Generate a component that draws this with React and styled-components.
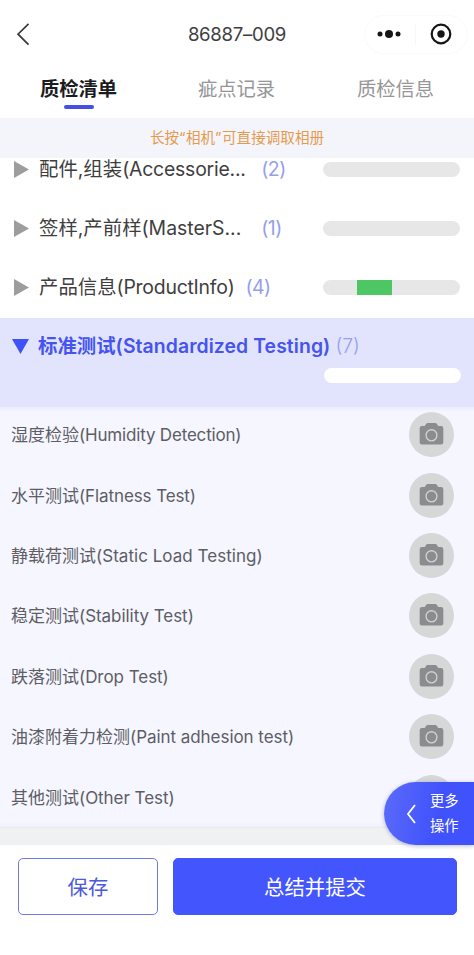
import React from "react";
import styled, { createGlobalStyle } from "styled-components";

const Global = createGlobalStyle`
  * { box-sizing: border-box; }
  body { margin: 0; background: #fff; }
  button { font: inherit; cursor: pointer; }
`;

const Page = styled.div`
  position: relative;
  display: flex;
  flex-direction: column;
  width: 474px;
  height: 955px;
  overflow: hidden;
  background: #fff;
  color: #3e3e40;
  font-family: Inter, "Noto Sans CJK SC", sans-serif;
`;

const NavBar = styled.header`
  display: grid;
  grid-template-columns: 110px 1fr 110px;
  align-items: center;
  height: 68px;
  flex: none;
`;

const BackButton = styled.button`
  display: flex;
  width: 46px;
  padding: 0 0 0 16px;
  border: 0;
  background: none;
`;

const Title = styled.h1`
  margin: 0;
  text-align: center;
  font: 400 18.6px/24px Inter, sans-serif;
  letter-spacing: -0.3px;
`;

const Capsule = styled.div`
  display: flex;
  align-items: center;
  gap: 14px;
  width: 104px;
  height: 39px;
  padding-left: 12px;
  border: 1px solid #fafafa;
  border-radius: 20px;
`;

const CapsuleDivider = styled.i`
  width: 1px;
  height: 22px;
  background: #f7f7f7;
`;

const Tabs = styled.nav`
  display: flex;
  height: 50px;
  flex: none;
`;

const Tab = styled.div`
  display: flex;
  flex-direction: column;
  align-items: center;
  flex: 1;
  padding: 7px 1px 0 0;
  font-size: 19.3px;
  line-height: 28px;
  font-weight: ${(p) => (p.$active ? 700 : 400)};
  color: ${(p) => (p.$active ? "#1c1c1e" : "#969698")};
  &:last-child { padding: 7px 0 0 1px; }
`;

const TabMark = styled.i`
  width: 30px;
  height: 4px;
  margin-top: 2px;
  border-radius: 2px;
  background: #444fe8;
`;

const Notice = styled.div`
  height: 40px;
  flex: none;
  background: #f3f5fa;
  color: #e69a50;
  text-align: center;
  font: 400 14.6px/37px "Noto Sans CJK SC", sans-serif;
`;

const Quote = styled.span`
  font-family: Inter, sans-serif;
  letter-spacing: 0.4px;
`;

const List = styled.main`
  flex: 1;
  overflow: hidden;
  background: linear-gradient(#f2f3f6, #f0f1f3);
`;

const Group = styled.div`
  display: flex;
  align-items: center;
  height: 59px;
  padding: 0 14px 3px;
  background: #fff;
  &:first-child { margin-top: -17px; }
`;

const GroupName = styled.span`
  margin-left: 10px;
  font-size: 19.4px;
  line-height: 28px;
  white-space: nowrap;
`;

const Latin = styled.span`
  letter-spacing: ${(p) => p.$track || 0}px;
`;

const Count = styled.span`
  margin-left: ${(p) => p.$gap}px;
  font-size: 19.4px;
  line-height: 28px;
  letter-spacing: ${(p) => (p.$light ? 0 : -0.5)}px;
  font-weight: ${(p) => (p.$light ? 300 : 400)};
  color: #969eed;
`;

const Meter = styled.div`
  width: 137px;
  height: 15px;
  margin-left: auto;
  flex: none;
  border-radius: 8px;
  background: ${(p) => (p.$open ? "#fff" : "#e7e7e7")};
`;

const MeterFill = styled.div`
  width: 25%;
  height: 100%;
  margin-left: 25%;
  background: #4cc764;
`;

const OpenGroup = styled.section`
  display: flex;
  flex-direction: column;
  height: 89px;
  padding: 14px 13px 0 12px;
  background: #e2e4fe;
`;

const OpenTitle = styled.div`
  display: flex;
  align-items: center;
  height: 28px;
  margin-bottom: 8px;
  color: #4654ef;
  ${GroupName} {
    margin-left: 9px;
    font-weight: 600;
  }
`;

const Items = styled.div`
  height: 421px;
  border-bottom: 1px solid #e9eaf0;
  background: linear-gradient(#ecedf9, #f5f6ff 5px, #f5f6ff 414px, #f0f1fa);
  overflow: hidden;
`;

const Item = styled.div`
  display: flex;
  align-items: center;
  justify-content: space-between;
  height: 60.4px;
  padding: 0 20.5px 5px 11px;
  color: #5d5d63;
  font-size: 17px;
  line-height: 26px;
  white-space: nowrap;
`;

const ItemName = styled.span`
  padding-top: 1px;
`;

const CameraButton = styled.button`
  display: grid;
  place-items: center;
  width: 45px;
  height: 45px;
  padding: 0 0 1px;
  border: 0;
  border-radius: 50%;
  background: #d6d8d8;
`;

const Footer = styled.footer`
  display: flex;
  gap: 15px;
  height: 110px;
  flex: none;
  padding: 13px 17px 0 18px;
  background: #fff;
`;

const Action = styled.button`
  flex: ${(p) => (p.$primary ? "1" : "0 0 140px")};
  height: 57px;
  padding: 0 0 2px;
  border: 1px solid ${(p) => (p.$primary ? "#4355fd" : "#6f7aea")};
  border-radius: 5px;
  background: ${(p) => (p.$primary ? "#4355fd" : "#fff")};
  color: ${(p) => (p.$primary ? "#fff" : "#4c58de")};
  font-size: 20.4px;
`;

const MoreTab = styled.button`
  position: absolute;
  right: 0;
  bottom: 110px;
  display: flex;
  align-items: center;
  gap: 13px;
  width: 90px;
  height: 63px;
  padding: 0 0 0 22px;
  border: 0;
  border-radius: 32px 0 0 32px;
  background: linear-gradient(100deg, #5b6bfa, #4052fc 60%);
  box-shadow: 0 1px 4px rgba(50, 60, 120, 0.35);
  color: #fff;
  font-size: 14.3px;
  line-height: 24.5px;
  text-align: left;
`;

const Camera = () => (
  <svg width="25" height="24" viewBox="0 0 26 24" preserveAspectRatio="none">
    <path
      d="M3 4H6L7.5 1.7Q8 1 9 1H17Q18 1 18.5 1.7L20 4H23Q25.3 4 25.3 6.3V20.2Q25.3 22.5 23 22.5H3Q.7 22.5 .7 20.2V6.3Q.7 4 3 4Z"
      fill="#8b8c8d"
    />
    <circle cx="13" cy="13.3" r="5.6" fill="none" stroke="#d0d2d2" strokeWidth="1.4" />
  </svg>
);

const groups = [
  { cjk: ["配件", "组装"], latin: "(Accessorie...", track: -0.2, gap: 15.5, count: 2 },
  { cjk: ["签样", "产前样"], latin: "(MasterS...", track: 0, gap: 20, count: 1 },
  { cjk: ["产品信息"], latin: "(ProductInfo)", track: -0.22, gap: 11, count: 4, filled: true },
];

const items = [
  ["湿度检验", "(Humidity Detection)", -0.18],
  ["水平测试", "(Flatness Test)", -0.1],
  ["静载荷测试", "(Static Load Testing)", 0.03],
  ["稳定测试", "(Stability Test)", -0.05],
  ["跌落测试", "(Drop Test)", -0.05],
  ["油漆附着力检测", "(Paint adhesion test)", -0.05],
  ["其他测试", "(Other Test)", -0.05],
];

export default function App() {
  return (
    <Page>
      <Global />
      <NavBar>
        <BackButton aria-label="back">
          <svg width="14" height="24" viewBox="0 0 14 24" fill="none" stroke="#3a3a3a" strokeWidth="1.7">
            <path d="M12.5 1.8 2 12.2 12.5 22.6" />
          </svg>
        </BackButton>
        <Title>86887–009</Title>
        <Capsule>
          <svg width="24" height="10" viewBox="0 0 24 10" fill="#151515">
            <circle cx="3" cy="5" r="2.5" />
            <circle cx="12" cy="5" r="4" />
            <circle cx="21" cy="5" r="2.5" />
          </svg>
          <CapsuleDivider />
          <svg width="22" height="22" viewBox="0 0 22 22">
            <circle cx="11" cy="11" r="9.3" fill="none" stroke="#151515" strokeWidth="2.2" />
            <circle cx="11" cy="11" r="3.7" fill="#151515" />
          </svg>
        </Capsule>
      </NavBar>
      <Tabs>
        <Tab $active>
          质检清单
          <TabMark />
        </Tab>
        <Tab>疵点记录</Tab>
        <Tab>质检信息</Tab>
      </Tabs>
      <Notice>
        长按<Quote>“</Quote>相机<Quote>”</Quote>可直接调取相册
      </Notice>
      <List>
        {groups.map((g) => (
          <Group key={g.latin}>
            <svg width="15" height="17" viewBox="0 0 15 17">
              <path d="M0 0 15 8.5 0 17Z" fill="#9d9d9f" />
            </svg>
            <GroupName>
              {g.cjk.join(",")}
              <Latin $track={g.track}>{g.latin}</Latin>
            </GroupName>
            <Count $gap={g.gap}>({g.count})</Count>
            <Meter>{g.filled && <MeterFill />}</Meter>
          </Group>
        ))}
        <OpenGroup>
          <OpenTitle>
            <svg width="17" height="15" viewBox="0 0 17 15">
              <path d="M0 0H17L8.5 15Z" fill="#3f51f8" />
            </svg>
            <GroupName>
              标准测试<Latin $track={0.08}>(Standardized Testing)</Latin>
            </GroupName>
            <Count $gap={5} $light>(7)</Count>
          </OpenTitle>
          <Meter $open />
        </OpenGroup>
        <Items>
          {items.map(([cjk, latin, track]) => (
            <Item key={cjk}>
              <ItemName>
                {cjk}
                <Latin $track={track}>{latin}</Latin>
              </ItemName>
              <CameraButton aria-label="camera">
                <Camera />
              </CameraButton>
            </Item>
          ))}
        </Items>
      </List>
      <Footer>
        <Action>保存</Action>
        <Action $primary>总结并提交</Action>
      </Footer>
      <MoreTab>
        <svg width="11" height="20" viewBox="0 0 11 20" fill="none" stroke="#fff" strokeWidth="1.8">
          <path d="M9 1 2 10 9 19" />
        </svg>
        <span>
          更多
          <br />
          操作
        </span>
      </MoreTab>
    </Page>
  );
}
